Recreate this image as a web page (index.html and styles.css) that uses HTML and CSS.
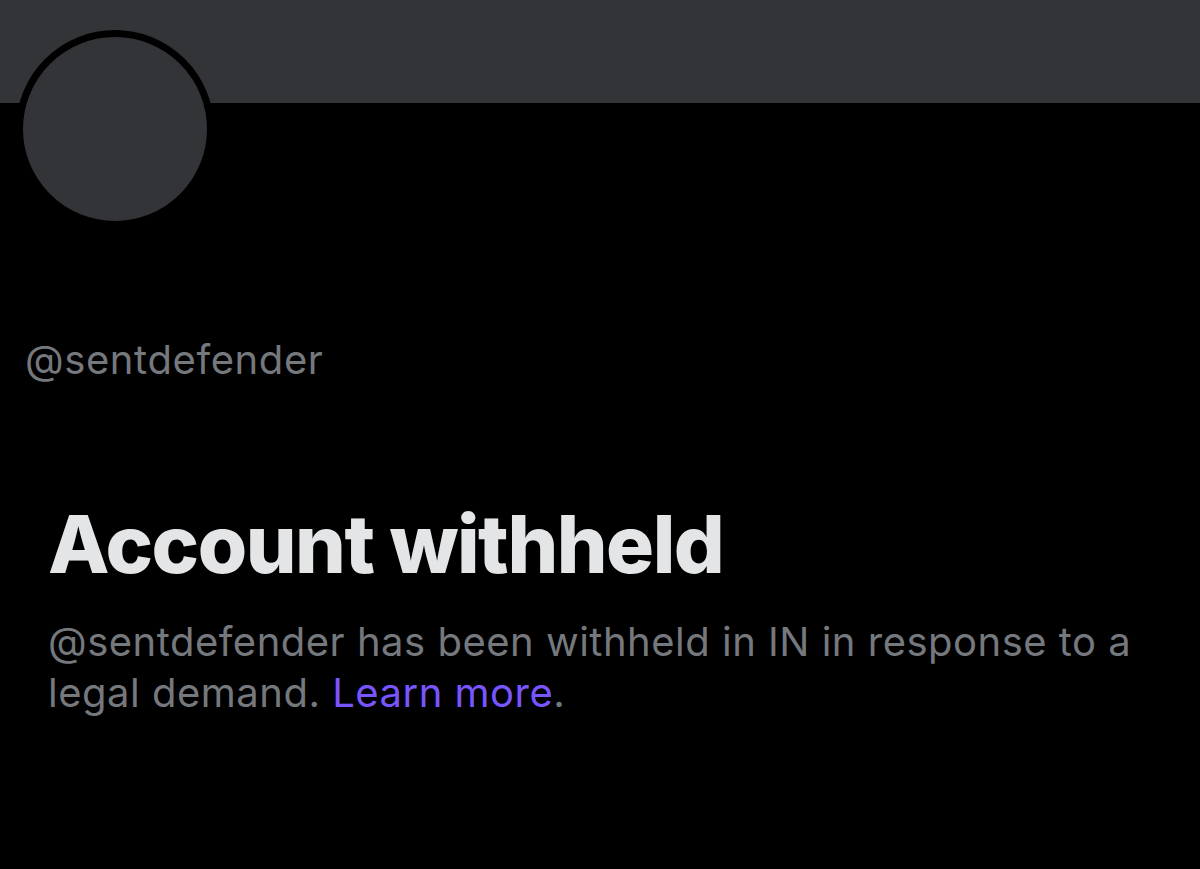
FILE: index.html
```html
<!DOCTYPE html>
<html lang="en">
<head>
    <meta charset="UTF-8">
    <meta name="viewport" content="width=device-width, initial-scale=1.0">
    <title>@sentdefender / X</title>
    <link rel="stylesheet" href="styles.css">
</head>
<body>
    <div class="banner"></div>
    <div class="profile">
        <div class="avatar"></div>
        <div class="handle">@sentdefender</div>
    </div>
    <div class="notice">
        <h1>Account withheld</h1>
        <p>@sentdefender has been withheld in IN in response to a legal demand. <a href="#">Learn more</a>.</p>
    </div>
</body>
</html>
```

FILE: styles.css
```css
body {
    margin: 0;
    padding: 0;
    background-color: #000;
    font-family: Inter, "Noto Sans", sans-serif;
    color: #75787d;
}
.banner {
    height: 103px;
    background-color: #333438;
}
.profile {
    padding-left: 16px;
}
.avatar {
    width: 184px;
    height: 184px;
    margin-top: -73px;
    border: 7px solid #000;
    border-radius: 50%;
    background-color: #333438;
}
.handle {
    margin-top: 106px;
    padding-left: 9px;
    font-size: 40px;
    line-height: 52px;
    letter-spacing: 0.6px;
}
.notice {
    padding: 0 48px;
    margin-top: 110px;
}
h1 {
    margin: 0;
    font-size: 80px;
    line-height: 96px;
    font-weight: 800;
    letter-spacing: -1.5px;
    color: #e4e5e6;
}
p {
    margin: 24px 0 0;
    font-size: 40px;
    line-height: 51px;
    letter-spacing: 0.5px;
}
a {
    color: #7856ff;
    text-decoration: none;
}
```
